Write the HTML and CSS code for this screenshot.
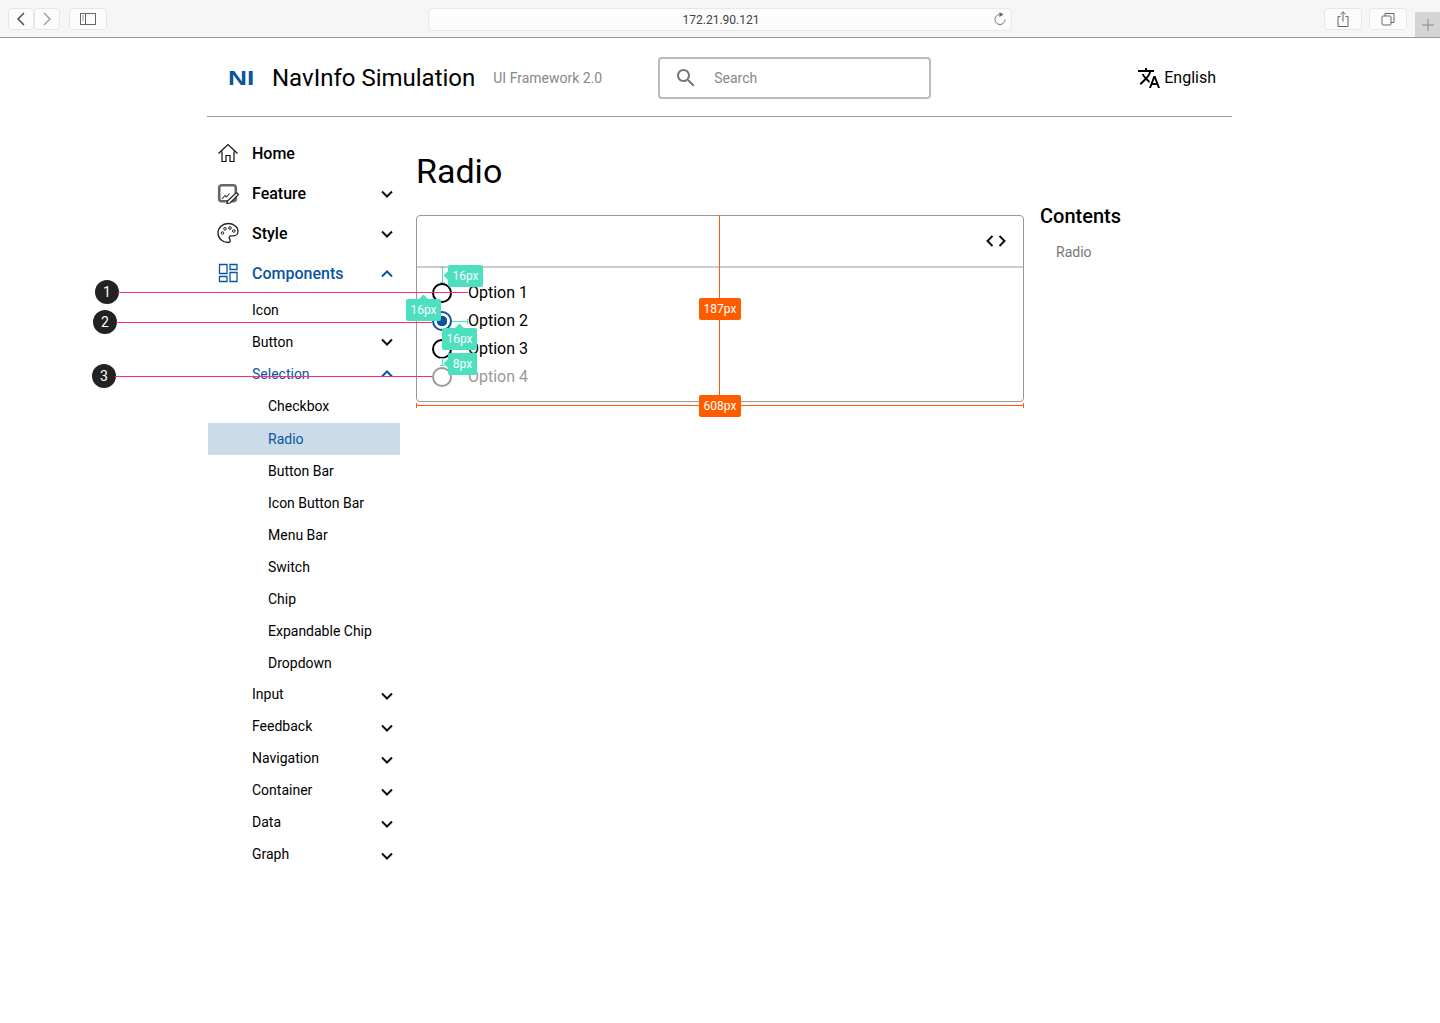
FILE: index.html
```html
<!DOCTYPE html>
<html lang="en">
<head>
    <meta charset="UTF-8">
    <meta name="viewport" content="width=device-width, initial-scale=1.0">
    <title>Radio - NavInfo Simulation</title>
    <link rel="stylesheet" href="styles.css">
</head>
<body>

<!-- Browser toolbar -->
<div class="browser-bar">
    <div class="tool-btn nav-btn">
        <svg width="12" height="16" viewBox="0 0 12 16"><path d="M9 2L3 8l6 6" fill="none" stroke="#444" stroke-width="1.4"/></svg>
    </div>
    <div class="tool-btn nav-btn">
        <svg width="12" height="16" viewBox="0 0 12 16"><path d="M3 2l6 6-6 6" fill="none" stroke="#999" stroke-width="1.4"/></svg>
    </div>
    <div class="tool-btn side-btn">
        <svg width="16" height="12" viewBox="0 0 16 12"><rect x="0.5" y="0.5" width="15" height="11" fill="none" stroke="#666"/><path d="M5.5 0.5v11" stroke="#666"/><path d="M2 3h2M2 5h2M2 7h2" stroke="#999"/></svg>
    </div>
    <div class="url-bar">
        <span class="url-text">172.21.90.121</span>
        <svg class="reload" width="14" height="14" viewBox="0 0 14 14"><path d="M7 2.5a5 5 0 1 0 5 5" fill="none" stroke="#777" stroke-width="1"/><path d="M6.5 0l4 2.5-4 2.5z" fill="#666"/></svg>
    </div>
    <div class="tool-btn wide-btn share-btn">
        <svg width="14" height="16" viewBox="0 0 14 16"><path d="M4.5 5.5H2v10h10v-10H9.5" fill="none" stroke="#666"/><path d="M7 10.5V1M4.5 3.2L7 .8l2.5 2.4" fill="none" stroke="#666"/></svg>
    </div>
    <div class="tool-btn wide-btn">
        <svg width="14" height="14" viewBox="0 0 14 14"><rect x="1" y="4" width="9" height="9" rx="1" fill="none" stroke="#666"/><path d="M4 4V1.5h9v9h-3" fill="none" stroke="#666"/></svg>
    </div>
    <div class="new-tab">
        <svg width="12" height="12" viewBox="0 0 12 12"><path d="M6 0v12M0 6h12" stroke="#888" stroke-width="1"/></svg>
    </div>
</div>

<div class="page">
    <!-- Header -->
    <header class="site-header">
        <span class="logo">NI</span>
        <span class="site-title">NavInfo Simulation</span>
        <span class="site-sub">UI Framework 2.0</span>
        <div class="search-box">
            <svg width="24" height="24" viewBox="0 0 24 24"><path fill="#777" d="M15.5 14h-.79l-.28-.27C15.41 12.59 16 11.11 16 9.5 16 5.91 13.09 3 9.5 3S3 5.91 3 9.5 5.91 16 9.5 16c1.61 0 3.09-.59 4.23-1.57l.27.28v.79l5 4.99L20.49 19l-4.99-5zm-6 0C7.01 14 5 11.99 5 9.5S7.01 5 9.5 5 14 7.01 14 9.5 11.99 14 9.5 14z"/></svg>
            <span class="search-text">Search</span>
        </div>
        <div class="lang">
            <svg width="24" height="24" viewBox="0 0 24 24"><path fill="#000" d="M12.87 15.07l-2.54-2.51.03-.03c1.74-1.94 2.98-4.17 3.71-6.53H17V4h-7V2H8v2H1v1.99h11.17C11.5 7.92 10.44 9.75 9 11.35 8.07 10.32 7.3 9.19 6.69 8h-2c.73 1.63 1.73 3.17 2.98 4.56l-5.09 5.02L4 19l5-5 3.11 3.11.76-2.04zM18.5 10h-2L12 22h2l1.12-3h4.75L21 22h2l-4.5-12zm-2.62 7l1.62-4.33L19.12 17h-3.24z"/></svg>
            <span class="lang-text">English</span>
        </div>
    </header>

    <div class="layout">
        <!-- Side menu -->
        <nav class="side-nav">
            <div class="nav-top">
                <svg class="nav-icon" width="24" height="24" viewBox="0 0 24 24"><path d="M2.5 12.5L12 3.5l9.5 9M6 10.5v10h4v-6h4v6h4v-10" fill="none" stroke="#111" stroke-width="1.2"/></svg>
                <span>Home</span>
            </div>
            <div class="nav-top">
                <svg class="nav-icon" width="24" height="24" viewBox="0 0 24 24"><rect x="3.2" y="4.2" width="16.6" height="16" rx="2.5" fill="none" stroke="#666" stroke-width="2.6"/><path d="M6 18l3-3.5 1.5 1.5 3-3.5" fill="none" stroke="#333" stroke-width="1.1"/><path d="M11.5 20l9-8.5 2 2-8.5 8.500-3 .5z" fill="#fff" stroke="#222" stroke-width="1.2"/></svg>
                <span>Feature</span>
                <svg class="chev" width="24" height="24" viewBox="0 0 24 24"><path d="M7 9.5l5 5 5-5" fill="none" stroke="#111" stroke-width="2"/></svg>
            </div>
            <div class="nav-top">
                <svg class="nav-icon" width="24" height="24" viewBox="0 0 24 24"><path d="M12 2.5C6.5 2.5 2 6.7 2 12s4.5 9.5 10 9.5c1.4 0 2.2-1 2.2-2.1 0-1.400-1-1.700-1-2.900 0-1 .8-1.700 1.800-1.700h2.500c2.600 0 4.500-1.900 4.500-4.300 0-4.500-4.500-8-10-8z" fill="none" stroke="#222" stroke-width="1.3"/><circle cx="6.5" cy="12" r="1.3" fill="none" stroke="#222"/><circle cx="9" cy="7.8" r="1.3" fill="none" stroke="#222"/><circle cx="14" cy="7" r="1.3" fill="none" stroke="#222"/><circle cx="17.8" cy="10" r="1.3" fill="none" stroke="#222"/></svg>
                <span>Style</span>
                <svg class="chev" width="24" height="24" viewBox="0 0 24 24"><path d="M7 9.5l5 5 5-5" fill="none" stroke="#111" stroke-width="2"/></svg>
            </div>
            <div class="nav-top active">
                <svg class="nav-icon" width="24" height="24" viewBox="0 0 24 24"><path d="M3.5 3.5H11v9H3.5zM14 3.5h7v5h-7zM14 11.5h7v9h-7zM3.500 15.500H11v5H3.500z" fill="none" stroke="#0b559f" stroke-width="1.3"/></svg>
                <span>Components</span>
                <svg class="chev" width="24" height="24" viewBox="0 0 24 24"><path d="M7 14.5l5-5 5 5" fill="none" stroke="#0b559f" stroke-width="2"/></svg>
            </div>

            <div class="nav-sub first-sub">Icon</div>
            <div class="nav-sub">
                <span>Button</span>
                <svg class="chev" width="24" height="24" viewBox="0 0 24 24"><path d="M7 9.5l5 5 5-5" fill="none" stroke="#111" stroke-width="2"/></svg>
            </div>
            <div class="nav-sub active">
                <span>Selection</span>
                <svg class="chev" width="24" height="24" viewBox="0 0 24 24"><path d="M7 14.5l5-5 5 5" fill="none" stroke="#0b559f" stroke-width="2"/></svg>
            </div>

            <div class="nav-leaf">Checkbox</div>
            <div class="nav-leaf selected">Radio</div>
            <div class="nav-leaf">Button Bar</div>
            <div class="nav-leaf">Icon Button Bar</div>
            <div class="nav-leaf">Menu Bar</div>
            <div class="nav-leaf">Switch</div>
            <div class="nav-leaf">Chip</div>
            <div class="nav-leaf">Expandable Chip</div>
            <div class="nav-leaf">Dropdown</div>

            <div class="nav-sub low after-leaf">
                <span>Input</span>
                <svg class="chev" width="24" height="24" viewBox="0 0 24 24"><path d="M7 9.5l5 5 5-5" fill="none" stroke="#111" stroke-width="2"/></svg>
            </div>
            <div class="nav-sub low">
                <span>Feedback</span>
                <svg class="chev" width="24" height="24" viewBox="0 0 24 24"><path d="M7 9.5l5 5 5-5" fill="none" stroke="#111" stroke-width="2"/></svg>
            </div>
            <div class="nav-sub low">
                <span>Navigation</span>
                <svg class="chev" width="24" height="24" viewBox="0 0 24 24"><path d="M7 9.5l5 5 5-5" fill="none" stroke="#111" stroke-width="2"/></svg>
            </div>
            <div class="nav-sub low">
                <span>Container</span>
                <svg class="chev" width="24" height="24" viewBox="0 0 24 24"><path d="M7 9.5l5 5 5-5" fill="none" stroke="#111" stroke-width="2"/></svg>
            </div>
            <div class="nav-sub low">
                <span>Data</span>
                <svg class="chev" width="24" height="24" viewBox="0 0 24 24"><path d="M7 9.5l5 5 5-5" fill="none" stroke="#111" stroke-width="2"/></svg>
            </div>
            <div class="nav-sub low">
                <span>Graph</span>
                <svg class="chev" width="24" height="24" viewBox="0 0 24 24"><path d="M7 9.5l5 5 5-5" fill="none" stroke="#111" stroke-width="2"/></svg>
            </div>
        </nav>

        <!-- Main content -->
        <main class="content">
            <h1>Radio</h1>
            <div class="demo-card">
                <div class="demo-tools">
                    <svg width="24" height="24" viewBox="0 0 24 24"><path d="M8.5 7l-5 5 5 5M15.5 7l5 5-5 5" fill="none" stroke="#111" stroke-width="2"/></svg>
                </div>
                <div class="demo-body">
                    <div class="radio-row"><span class="radio"></span><span>Option 1</span></div>
                    <div class="radio-row"><span class="radio checked"></span><span>Option 2</span></div>
                    <div class="radio-row"><span class="radio"></span><span>Option 3</span></div>
                    <div class="radio-row disabled"><span class="radio"></span><span>Option 4</span></div>
                </div>
            </div>
        </main>

        <!-- Table of contents -->
        <aside class="toc">
            <h2>Contents</h2>
            <div class="toc-item">Radio</div>
        </aside>
    </div>
</div>

<!-- Spec annotations drawn on top of the page -->
<div class="marks">
    <div class="pin pin-1">1</div>
    <div class="pin pin-2">2</div>
    <div class="pin pin-3">3</div>
    <div class="pink-line line-1"></div>
    <div class="pink-line line-2"></div>
    <div class="pink-line line-3"></div>

    <div class="gap-v gap-top"></div>
    <div class="gap-h gap-label"></div>
    <div class="gap-v gap-row"></div>
    <div class="tag tag-left tag-top">16px</div>
    <div class="tag tag-up tag-inset">16px</div>
    <div class="tag tag-up tag-space">16px</div>
    <div class="tag tag-left tag-row">8px</div>

    <div class="size-v"></div>
    <div class="size-h"></div>
    <div class="size-tag size-height">187px</div>
    <div class="size-tag size-width">608px</div>
</div>

</body>
</html>
```

FILE: styles.css
```css
body {
    margin: 0;
    height: 1023px;
    position: relative;
    overflow: hidden;
    background-color: #fff;
    color: #000;
    font-family: Roboto, "Liberation Sans", sans-serif;
}

/* Browser toolbar */
.browser-bar {
    display: flex;
    align-items: flex-start;
    height: 29px;
    padding: 8px 0 0 8px;
    background-color: #f6f6f6;
    border-bottom: 1px solid #999;
}

.tool-btn {
    display: flex;
    justify-content: center;
    align-items: center;
    height: 22px;
    background-color: #fcfcfc;
    border: 1px solid #e6e6e6;
    border-radius: 4px;
    box-sizing: border-box;
}

.nav-btn {
    width: 26px;
}

.side-btn {
    width: 38px;
    margin-left: 9px;
}

.wide-btn {
    width: 38px;
    margin-right: 7px;
}

.share-btn {
    margin-left: 312px;
}

.url-bar {
    position: relative;
    width: 584px;
    height: 23px;
    margin-left: 321px;
    padding-left: 2px;
    background-color: #fcfcfc;
    border: 1px solid #e8e8e8;
    border-radius: 4px;
    box-sizing: border-box;
    font-size: 12px;
    line-height: 23px;
    text-align: center;
    color: #444;
}

.reload {
    position: absolute;
    right: 4px;
    top: 3px;
}

.new-tab {
    display: flex;
    justify-content: center;
    align-items: center;
    width: 25px;
    height: 25px;
    margin: 4px 0 0 1px;
    background-color: #d4d4d4;
}

/* Page */
.page {
    width: 1025px;
    margin-left: 207px;
}

.site-header {
    display: flex;
    align-items: center;
    height: 76px;
    padding-top: 2px;
    border-bottom: 1px solid #999;
}

.logo {
    display: inline-block;
    width: 25px;
    margin-left: 21px;
    font-family: "Liberation Sans", sans-serif;
    font-size: 21px;
    font-weight: bold;
    color: #0b559f;
    transform: scaleX(1.25);
    transform-origin: left center;
}

.site-title {
    margin-left: 19px;
    font-size: 24px;
}

.site-sub {
    margin-left: 18px;
    font-size: 14px;
    color: #888;
}

.search-box {
    display: flex;
    align-items: center;
    width: 273px;
    height: 42px;
    margin-left: 56px;
    padding-left: 14px;
    box-sizing: border-box;
    border: 2px solid #bbb;
    border-radius: 4px;
}

.search-text {
    margin-left: 16px;
    font-size: 14px;
    color: #888;
}

.lang {
    display: flex;
    align-items: center;
    gap: 3px;
    margin-left: auto;
    padding-right: 16px;
    font-size: 16px;
}

.lang-text {
    margin-bottom: 2px;
}

.layout {
    display: flex;
}

/* Side menu */
.side-nav {
    width: 192px;
    margin-left: 1px;
    padding-top: 16px;
}

.nav-top {
    display: flex;
    align-items: center;
    height: 40px;
    padding: 0 1px 0 8px;
    font-size: 16px;
    font-weight: 500;
}

.nav-icon {
    margin-right: 12px;
}

.chev {
    margin-left: auto;
}

.nav-top .chev {
    margin-top: 2px;
}

.nav-sub {
    display: flex;
    align-items: center;
    height: 32px;
    padding: 0 1px 0 44px;
    font-size: 14px;
}

.nav-sub.low .chev {
    margin-top: 4px;
}

.first-sub {
    margin-top: 1px;
}

.after-leaf {
    margin-top: -1px;
}

.nav-leaf {
    height: 32px;
    padding-left: 60px;
    font-size: 14px;
    line-height: 32px;
}

.nav-leaf.selected {
    margin-top: 1px;
    background-color: #cbdbea;
    color: #0b559f;
}

.active {
    color: #0b559f;
}

/* Main content */
.content {
    width: 608px;
    margin-left: 16px;
    padding-top: 34px;
}

.content h1 {
    margin: 0 0 24px 0;
    font-size: 34px;
    font-weight: 400;
    line-height: 40px;
}

.demo-card {
    height: 187px;
    box-sizing: border-box;
    border: 1px solid #999;
    border-radius: 4px;
}

.demo-tools {
    display: flex;
    justify-content: flex-end;
    align-items: center;
    height: 52px;
    padding-right: 15px;
    box-sizing: border-box;
    border-bottom: 2px solid #ccc;
}

.demo-body {
    display: flex;
    flex-direction: column;
    gap: 8px;
    padding: 14px 0 0 15px;
}

.radio-row {
    display: flex;
    align-items: center;
    gap: 16px;
    height: 20px;
    font-size: 16px;
}

.radio {
    width: 20px;
    height: 20px;
    margin-top: 2px;
    box-sizing: border-box;
    border: 2px solid #000;
    border-radius: 50%;
}

.radio.checked {
    border-color: #0b559f;
    background: radial-gradient(circle, #0b559f 0, #0b559f 5px, #fff 5.5px);
}

.disabled {
    color: #999;
}

.disabled .radio {
    border-color: #999;
}

/* Table of contents */
.toc {
    margin-left: 16px;
    padding-top: 87px;
}

.toc h2 {
    margin: 0;
    font-size: 20px;
    font-weight: 500;
    line-height: 24px;
}

.toc-item {
    margin-top: 12px;
    padding-left: 16px;
    font-size: 14px;
    line-height: 24px;
    color: #777;
}

/* Annotations */
.marks {
    position: absolute;
    left: 0;
    top: 0;
    width: 1440px;
    height: 1023px;
}

.pin {
    position: absolute;
    width: 24px;
    height: 24px;
    border-radius: 50%;
    background-color: #222;
    color: #fff;
    font-size: 14px;
    line-height: 24px;
    text-align: center;
}

.pin-1 { left: 95px; top: 280px; }
.pin-2 { left: 93px; top: 310px; }
.pin-3 { left: 92px; top: 364px; }

.pink-line {
    position: absolute;
    height: 1px;
    background-color: #ff2d78;
}

.line-1 { left: 118px; top: 292px; width: 350px; }
.line-2 { left: 116px; top: 322px; width: 316px; }
.line-3 { left: 115px; top: 376px; width: 317px; }

.gap-v,
.gap-h {
    position: absolute;
    box-sizing: border-box;
    border: 0 solid #4de0bf;
}

.gap-v {
    width: 5px;
    border-width: 1px 0;
    background: linear-gradient(#4de0bf, #4de0bf) center / 1px 100% no-repeat;
}

.gap-h {
    height: 5px;
    border-right-width: 1px;
    background: linear-gradient(#4de0bf, #4de0bf) center / 100% 1px no-repeat;
}

.gap-top { left: 440px; top: 267px; height: 16px; }
.gap-label { left: 452px; top: 319px; width: 16px; }
.gap-row { left: 440px; top: 358px; height: 8px; }

.tag {
    position: absolute;
    height: 22px;
    border-radius: 2px;
    background-color: #4de0bf;
    color: #fff;
    font-size: 12px;
    line-height: 22px;
    text-align: center;
}

.tag::before {
    content: "";
    position: absolute;
    width: 7px;
    height: 7px;
    background-color: #4de0bf;
    transform: rotate(45deg);
}

.tag-left::before {
    left: -3px;
    top: 7px;
}

.tag-up::before {
    left: 14px;
    top: -3px;
}

.tag-top { left: 448px; top: 265px; width: 35px; }
.tag-inset { left: 406px; top: 299px; width: 35px; }
.tag-space { left: 442px; top: 328px; width: 35px; }
.tag-row { left: 448px; top: 353px; width: 29px; }

.size-v {
    position: absolute;
    left: 719px;
    top: 215px;
    width: 1px;
    height: 187px;
    background-color: #ff5c00;
}

.size-h {
    position: absolute;
    left: 416px;
    top: 403px;
    width: 608px;
    height: 5px;
    box-sizing: border-box;
    border: 0 solid #ff5c00;
    border-width: 0 1px;
    background: linear-gradient(#ff5c00, #ff5c00) center / 100% 1px no-repeat;
}

.size-tag {
    position: absolute;
    left: 699px;
    width: 42px;
    height: 22px;
    border-radius: 2px;
    background-color: #ff5c00;
    color: #fff;
    font-size: 12px;
    line-height: 22px;
    text-align: center;
}

.size-height { top: 298px; }
.size-width { top: 395px; }
```
